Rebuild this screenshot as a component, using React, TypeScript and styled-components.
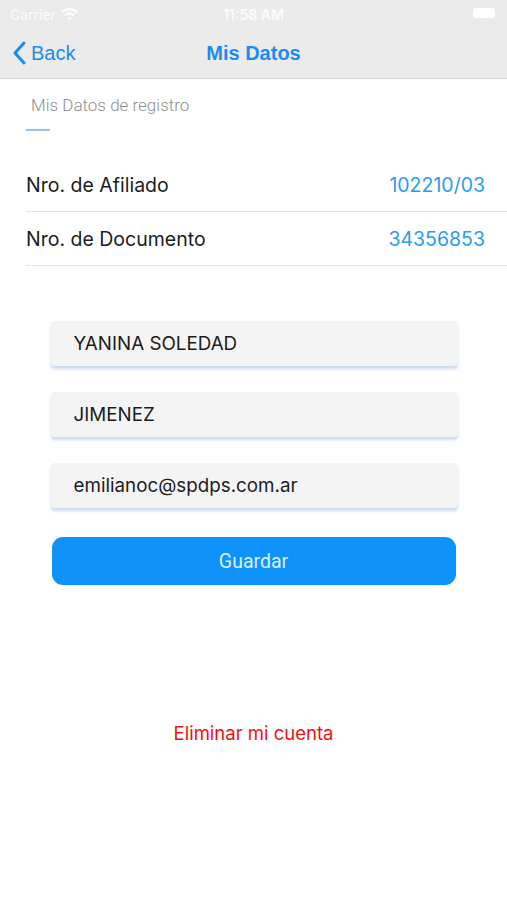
import React from 'react'
import styled, { createGlobalStyle } from 'styled-components'

const GlobalStyle = createGlobalStyle`
  html, body {
    margin: 0;
    padding: 0;
    background: #ffffff;
  }
  * {
    box-sizing: border-box;
  }
`

const Screen = styled.div`
  width: 507px;
  height: 900px;
  display: flex;
  flex-direction: column;
  background: #ffffff;
  font-family: Inter, "Liberation Sans", Arial, sans-serif;
  overflow: hidden;
`

const StatusBar = styled.div`
  height: 28px;
  background: #ebebeb;
  display: flex;
  align-items: center;
  justify-content: space-between;
  padding: 0 12px 0 10px;
  color: rgba(255, 255, 255, 0.85);
  font-size: 14px;
  position: relative;
`

const Carrier = styled.div`
  display: flex;
  align-items: center;
  gap: 5px;
`

const Clock = styled.div`
  position: absolute;
  left: 0;
  right: 0;
  text-align: center;
  font-weight: 600;
  font-size: 14px;
`

const Battery = styled.div`
  width: 22px;
  height: 10px;
  border-radius: 3px;
  background: #ffffff;
  margin-bottom: 2px;
`

const NavBar = styled.div`
  height: 51px;
  background: #ebebeb;
  border-bottom: 1px solid #d6d6d6;
  display: flex;
  align-items: center;
  position: relative;
`

const BackButton = styled.div`
  display: flex;
  align-items: center;
  gap: 5px;
  padding-left: 12px;
  color: #1a8cf0;
  font-size: 20px;
  font-family: "Liberation Sans", Arial, sans-serif;
  z-index: 1;
`

const NavTitle = styled.div`
  position: absolute;
  left: 0;
  right: 0;
  text-align: center;
  color: #1a8cf0;
  font-family: "Liberation Sans", Arial, sans-serif;
  font-size: 20px;
  font-weight: bold;
`

const Content = styled.div`
  display: flex;
  flex-direction: column;
  padding-left: 26px;
`

const SectionTitle = styled.div`
  margin-top: 16px;
  padding-left: 5px;
  font-family: Roboto, sans-serif;
  font-weight: 300;
  font-size: 17px;
  color: #8f8f8f;
`

const Underline = styled.div`
  margin-top: 14px;
  width: 24px;
  height: 2px;
  background: #8ec4f2;
`

const InfoList = styled.div`
  margin-top: 27px;
  display: flex;
  flex-direction: column;
`

const InfoRow = styled.div`
  height: 54px;
  display: flex;
  align-items: center;
  justify-content: space-between;
  padding-right: 22px;
  border-bottom: 1px solid #e4e4e4;
  font-size: 19.5px;
`

const Label = styled.span`
  color: #1c1c1c;
`

const Value = styled.span`
  color: #2c9bef;
`

const Form = styled.div`
  margin-top: 55px;
  display: flex;
  flex-direction: column;
  align-items: center;
  gap: 26px;
`

const Field = styled.div`
  width: 407px;
  height: 45px;
  margin-left: 1px;
  background: #f5f4f5;
  border-radius: 4px;
  box-shadow: 0 3px 3px rgba(110, 150, 210, 0.35);
  display: flex;
  align-items: center;
  padding-left: 23px;
  font-size: 18.8px;
  color: #1c1c1c;
`

const SaveButton = styled.div`
  margin-top: 3px;
  width: 404px;
  height: 48px;
  border-radius: 11px;
  background: #0f92fa;
  display: flex;
  align-items: center;
  justify-content: center;
  font-family: Roboto, sans-serif;
  font-size: 19.5px;
  color: #def0ff;
`

const DeleteLink = styled.div`
  margin-top: 137px;
  text-align: center;
  color: #f01010;
  font-size: 18.5px;
`

const Wifi = () => (
  <svg width="17" height="13" viewBox="0 0 17 13" fill="#ffffff" opacity="0.85">
    <path d="M8.5 0C5.2 0 2.3 1.3 0 3.4l1.6 1.7C3.4 3.4 5.8 2.4 8.5 2.4s5.1 1 6.9 2.7L17 3.4C14.7 1.3 11.8 0 8.5 0z" />
    <path d="M8.5 4.5c-2 0-3.8.8-5.1 2l1.6 1.7c.9-.9 2.2-1.4 3.5-1.4s2.6.5 3.5 1.4l1.6-1.7c-1.3-1.2-3.1-2-5.1-2z" />
    <path d="M8.5 9c-.9 0-1.7.4-2.3.9L8.5 12.4l2.3-2.5C10.2 9.4 9.4 9 8.5 9z" />
  </svg>
)

const Chevron = () => (
  <svg width="14" height="24" viewBox="0 0 14 24">
    <path d="M12 2 L3 12 L12 22" fill="none" stroke="#1a8cf0" strokeWidth="3" strokeLinecap="round" strokeLinejoin="round" />
  </svg>
)

const App = () => {
  const datos = [
    { label: 'Nro. de Afiliado', valor: '102210/03' },
    { label: 'Nro. de Documento', valor: '34356853' },
  ]
  const campos = ['YANINA SOLEDAD', 'JIMENEZ', 'emilianoc@spdps.com.ar']

  return (
    <>
      <GlobalStyle />
      <Screen>
        <StatusBar>
          <Carrier>Carrier <Wifi /></Carrier>
          <Clock>11:58 AM</Clock>
          <Battery />
        </StatusBar>
        <NavBar>
          <BackButton><Chevron />Back</BackButton>
          <NavTitle>Mis Datos</NavTitle>
        </NavBar>
        <Content>
          <SectionTitle>Mis Datos de registro</SectionTitle>
          <Underline />
          <InfoList>
            {datos.map((d) => (
              <InfoRow key={d.label}>
                <Label>{d.label}</Label>
                <Value>{d.valor}</Value>
              </InfoRow>
            ))}
          </InfoList>
        </Content>
        <Form>
          {campos.map((c) => (
            <Field key={c}>{c}</Field>
          ))}
          <SaveButton>Guardar</SaveButton>
        </Form>
        <DeleteLink>Eliminar mi cuenta</DeleteLink>
      </Screen>
    </>
  )
}

export default App
